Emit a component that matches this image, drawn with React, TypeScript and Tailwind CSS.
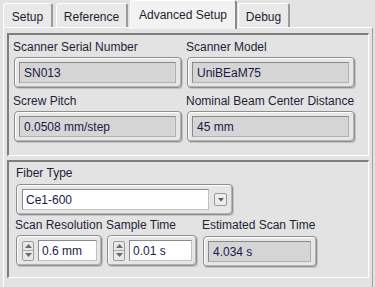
import React from 'react';

// LabVIEW-style "Advanced Setup" tab page

const Tab: React.FC<{ label: string; selected?: boolean; className?: string }> = ({ label, selected, className }) => (
  <div
    className={
      selected
        ? `relative z-10 h-[29px] -mb-[2px] flex items-start justify-center pt-[6px] bg-[#f2f2f2] border-t border-l border-white border-r-2 border-r-[#8a8a8a] rounded-t-[3px] text-[#1e1e30] ${className ?? ''}`
        : `h-[24px] flex items-start justify-center pt-[6px] bg-[#e9e9e9] border-t border-l border-white border-r-2 border-r-[#9a9a9a] rounded-t-[3px] text-[#1e1e30] ${className ?? ''}`
    }
  >
    {label}
  </div>
);

const Indicator: React.FC<{ value: string; className?: string }> = ({ value, className }) => (
  <div
    className={`h-[31px] rounded-[4px] border border-[#8e8e8e] bg-[#e6e6e6] shadow-[inset_1px_1px_0_#ffffff,inset_-1px_-1px_0_#b4b4b4,1px_1px_0_#c4c4c4] pl-[4px] pr-[5px] py-[4px] ${className ?? ''}`}
  >
    <div className="h-full border border-[#8a8a8a] border-b-[#b0b0b0] border-r-[#b0b0b0] bg-[#d5d5d5] flex items-center pl-[4px] text-[#1a1a48]">
      {value}
    </div>
  </div>
);

const Spinner: React.FC<{ value: string; className?: string }> = ({ value, className }) => (
  <div
    className={`h-[31px] rounded-[4px] border border-[#8e8e8e] bg-[#e6e6e6] shadow-[inset_1px_1px_0_#ffffff,inset_-1px_-1px_0_#b4b4b4,1px_1px_0_#c4c4c4] flex items-center pl-[5px] pr-[4px] gap-[4px] ${className ?? ''}`}
  >
    <div className="w-[12px] h-[20px] flex flex-col border border-[#9c9c9c] rounded-[2px] bg-[#e8e8e8]">
      <div className="flex-1 flex items-center justify-center border-b border-[#a8a8a8]">
        <svg width="7" height="4" viewBox="0 0 7 4">
          <path d="M0 4 L3.5 0 L7 4 Z" fill="#6a6a6a" />
        </svg>
      </div>
      <div className="flex-1 flex items-center justify-center">
        <svg width="7" height="4" viewBox="0 0 7 4">
          <path d="M0 0 L3.5 4 L7 0 Z" fill="#6a6a6a" />
        </svg>
      </div>
    </div>
    <div className="flex-1 h-[21px] border border-[#8a8a8a] border-b-[#c0c0c0] border-r-[#c0c0c0] bg-white flex items-center pl-[3px] text-[#1a1a48]">
      {value}
    </div>
  </div>
);

export default function App() {
  return (
    <div
      className="w-[375px] h-[287px] overflow-hidden bg-[#e3e3e3] text-[12px] leading-[14px] text-[#1f1f38]"
      style={{ fontFamily: '"Liberation Sans", Arial, sans-serif' }}
    >
      {/* tab strip */}
      <div className="h-[27px] flex items-end pl-[3px]">
        <Tab label="Setup" className="w-[50px]" />
        <Tab label="Reference" className="w-[72px] ml-[3px]" />
        <Tab label="Advanced Setup" selected className="w-[107px] ml-[2px] pt-[7px]" />
        <Tab label="Debug" className="w-[52px] ml-[1px]" />
      </div>

      {/* tab panel */}
      <div className="ml-[3px] w-[370px] h-[260px] border-t border-l border-white border-r border-r-[#a0a0a0] pl-[3px] pt-[5px] bg-[#e3e3e3]">
        {/* group 1 */}
        <div className="w-[362px] h-[123px] border-t-2 border-l-2 border-[#7e7e7e] border-b border-r border-b-white border-r-white pl-[5px] pt-[5px]">
          <div className="flex gap-[5px]">
            <div className="flex flex-col w-[168px]">
              <div className="-ml-[1px] h-[14px]">Scanner Serial Number</div>
              <Indicator value="SN013" className="mt-[3px]" />
            </div>
            <div className="flex flex-col w-[168px]">
              <div className="-ml-[1px] h-[14px]">Scanner Model</div>
              <Indicator value="UniBEaM75" className="mt-[3px]" />
            </div>
          </div>
          <div className="flex gap-[5px] mt-[6px]">
            <div className="flex flex-col w-[168px]">
              <div className="-ml-[1px] h-[14px]">Screw Pitch</div>
              <Indicator value="0.0508 mm/step" className="mt-[3px]" />
            </div>
            <div className="flex flex-col w-[168px]">
              <div className="-ml-[1px] h-[14px]">Nominal Beam Center Distance</div>
              <Indicator value="45 mm" className="mt-[3px]" />
            </div>
          </div>
        </div>

        {/* group 2 */}
        <div className="mt-[4px] w-[362px] h-[118px] border-t-2 border-l-2 border-[#7e7e7e] border-b border-r border-b-white border-r-white pl-[7px] pt-[4px]">
          <div className="h-[14px]">Fiber Type</div>
          <div className="mt-[4px] w-[217px] h-[31px] rounded-[4px] border border-[#8e8e8e] bg-[#e6e6e6] shadow-[inset_1px_1px_0_#ffffff,inset_-1px_-1px_0_#b4b4b4,1px_1px_0_#c4c4c4] flex items-center pl-[5px] pr-[4px] gap-[5px]">
            <div className="w-[187px] h-[21px] border border-[#8a8a8a] border-b-[#c0c0c0] border-r-[#c0c0c0] bg-white flex items-center pl-[3px] text-[#1a1a48]">
              Ce1-600
            </div>
            <div className="w-[13px] h-[13px] border border-[#9a9a9a] rounded-[2px] bg-[#ececec] flex items-center justify-center">
              <svg width="6" height="4" viewBox="0 0 6 4">
                <path d="M0 0 L3 3.5 L6 0 Z" fill="#5a5a5a" />
              </svg>
            </div>
          </div>
          <div className="flex mt-[3px]">
            <div className="flex flex-col w-[91px]">
              <div className="h-[14px] -ml-[1px]">Scan Resolution</div>
              <Spinner value="0.6 mm" className="mt-[3px] w-[86px]" />
            </div>
            <div className="flex flex-col w-[96px]">
              <div className="h-[14px] -ml-[1px]">Sample Time</div>
              <Spinner value="0.01 s" className="mt-[3px] w-[90px]" />
            </div>
            <div className="flex flex-col w-[114px]">
              <div className="h-[14px] -ml-[1px]">Estimated Scan Time</div>
              <Indicator value="4.034 s" className="mt-[4px] w-[114px]" />
            </div>
          </div>
        </div>
      </div>
    </div>
  );
}
